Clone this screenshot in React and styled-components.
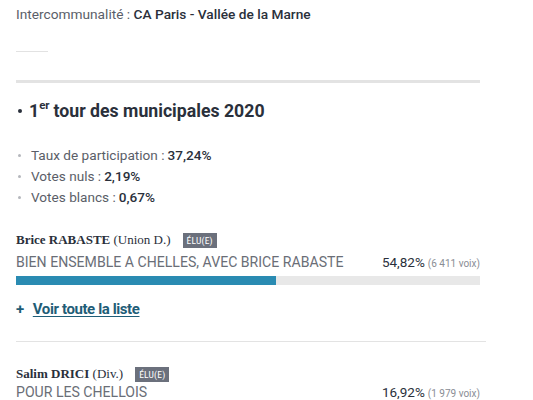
import styled, { createGlobalStyle } from "styled-components";

const GlobalStyle = createGlobalStyle`
  body {
    margin: 0;
    background: #fff;
    font-family: Roboto, "Liberation Sans", sans-serif;
    color: #2a303b;
  }
`;

const Page = styled.div`
  padding: 5px 47px 0 16px;
  width: 470px;
`;

const Interco = styled.div`
  font-size: 13.7px;
  line-height: 18px;
  color: #5a5e68;
  & strong {
    font-weight: 500;
    color: #2a303b;
  }
`;

const ShortRule = styled.div`
  width: 32px;
  height: 1px;
  background: #e2e2e2;
  margin: 28px 0 28px;
`;

const ThickRule = styled.div`
  height: 3px;
  background: #e3e3e3;
  width: 464px;
`;

const Heading = styled.h2`
  margin: 15px 0 0;
  font-size: 17.7px;
  font-weight: 700;
  line-height: 26px;
  display: flex;
  align-items: center;
  gap: 6px;
  color: #2a303b;
  & sup {
    font-size: 11.5px;
    line-height: 0;
    position: relative;
    top: -1px;
    margin-right: 4px;
  }
`;

const Dot = styled.span`
  width: 4px;
  height: 4px;
  border-radius: 50%;
  background: #2a303b;
  margin: 0 1px 0 2px;
`;

const Stats = styled.ul`
  list-style: none;
  margin: 21px 0 0;
  padding: 0;
`;

const Stat = styled.li`
  font-size: 13.6px;
  line-height: 21px;
  color: #5a5e68;
  display: flex;
  align-items: center;
  &::before {
    content: "";
    width: 3px;
    height: 3px;
    border-radius: 50%;
    background: #b5b7bc;
    margin: 0 10px 0 2px;
  }
  & strong {
    font-weight: 500;
    color: #2a303b;
    margin-left: 3px;
  }
`;

const Candidate = styled.div`
  margin-top: ${(p) => p.$top}px;
`;

const NameRow = styled.div`
  display: flex;
  align-items: center;
  font-family: "Liberation Serif", "DejaVu Serif", serif;
  font-size: 13px;
  line-height: 18px;
  color: #2a303b;
  & b {
    font-weight: 700;
  }
`;

const Badge = styled.span`
  margin-left: 12px;
  background: #6b707c;
  color: #fff;
  font-family: "Liberation Sans Narrow", "Roboto Condensed", Roboto, sans-serif;
  font-size: 9.5px;
  letter-spacing: 0.2px;
  padding: 2px 4px 1px;
  line-height: 12px;
`;

const ListRow = styled.div`
  display: flex;
  justify-content: space-between;
  align-items: baseline;
  margin-top: ${(p) => p.$gap}px;
  width: 464px;
`;

const ListName = styled.span`
  font-size: 14.1px;
  color: #6a6e77;
  text-transform: uppercase;
`;

const Score = styled.span`
  font-size: 13.5px;
  color: #2a303b;
  & small {
    font-size: 10px;
    color: #8a8d94;
    margin-left: 3px;
  }
`;

const Bar = styled.div`
  margin-top: 6px;
  width: 464px;
  height: 9px;
  background: #e8e8e8;
`;

const Fill = styled.div`
  height: 100%;
  background: #2a8bb2;
`;

const MoreLink = styled.a`
  display: flex;
  align-items: center;
  gap: 9px;
  margin-top: 15px;
  font-size: 15px;
  font-weight: 700;
  color: #1f5d77;
  letter-spacing: -0.4px;
  & span {
    text-decoration: underline;
    text-underline-offset: 2px;
  }
`;

const Divider = styled.div`
  margin-top: 23px;
  width: 470px;
  height: 1px;
  background: #e3e3e3;
`;

const results = [
  {
    name: "Brice RABASTE",
    party: "(Union D.)",
    list: "BIEN ENSEMBLE A CHELLES, AVEC BRICE RABASTE",
    pct: "54,82%",
    votes: "(6 411 voix)",
    value: 54.82,
    top: 23,
    gap: 5,
    bar: true,
  },
  {
    name: "Salim DRICI",
    party: "(Div.)",
    list: "POUR LES CHELLOIS",
    pct: "16,92%",
    votes: "(1 979 voix)",
    value: 16.92,
    top: 23,
    gap: 1,
    bar: false,
  },
];

function Result({ r }) {
  return (
    <Candidate $top={r.top}>
      <NameRow>
        <b>{r.name}</b>&nbsp;{r.party}
        <Badge>ÉLU(E)</Badge>
      </NameRow>
      <ListRow $gap={r.gap}>
        <ListName>{r.list}</ListName>
        <Score>
          {r.pct}
          <small>{r.votes}</small>
        </Score>
      </ListRow>
      {r.bar && (
        <>
          <Bar>
            <Fill style={{ width: `${r.value + 1.3}%` }} />
          </Bar>
          <MoreLink>
            +<span>Voir toute la liste</span>
          </MoreLink>
          <Divider />
        </>
      )}
    </Candidate>
  );
}

export default function App() {
  return (
    <>
      <GlobalStyle />
      <Page>
        <Interco>
          Intercommunalité : <strong>CA Paris - Vallée de la Marne</strong>
        </Interco>
        <ShortRule />
        <ThickRule />
        <Heading>
          <Dot />
          <span>
            1<sup>er</sup>tour des municipales 2020
          </span>
        </Heading>
        <Stats>
          <Stat>
            Taux de participation :<strong>37,24%</strong>
          </Stat>
          <Stat>
            Votes nuls :<strong>2,19%</strong>
          </Stat>
          <Stat>
            Votes blancs :<strong>0,67%</strong>
          </Stat>
        </Stats>
        {results.map((r) => (
          <Result key={r.name} r={r} />
        ))}
      </Page>
    </>
  );
}
